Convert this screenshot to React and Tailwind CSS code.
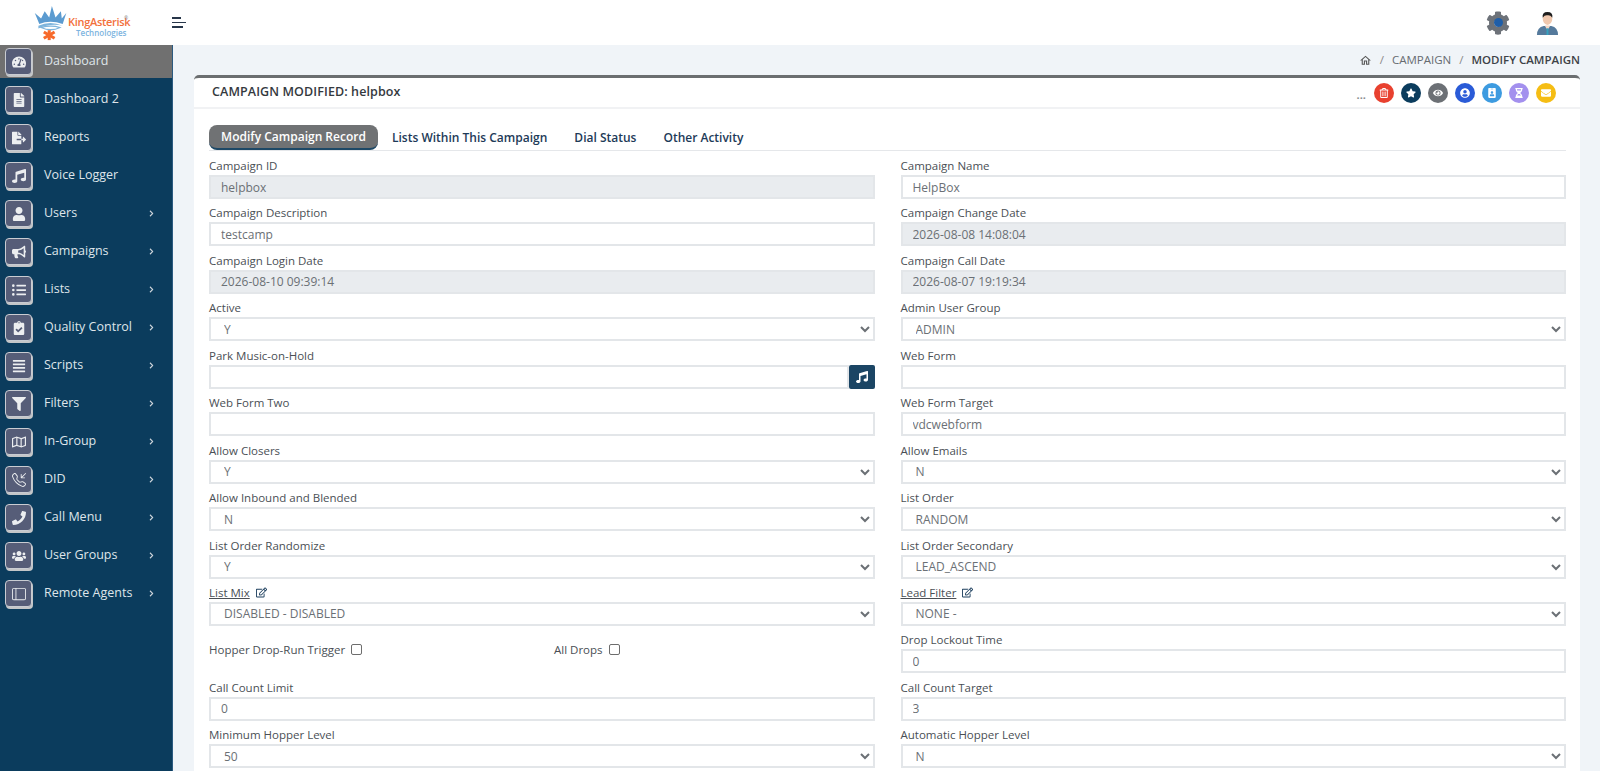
import React from "react";
import {
  FaTachometerAlt, FaFileAlt, FaFileExport, FaMusic, FaUser, FaBullhorn, FaListUl, FaClipboardCheck,
  FaAlignJustify, FaFilter, FaRegMap, FaPhone, FaUsers, FaChevronRight, FaRegEdit, FaRegTrashAlt, FaStar,
  FaEye, FaUserCircle, FaIdBadge, FaHourglassHalf, FaEnvelope, FaCog, FaHome,
} from "react-icons/fa";
import { BsTelephoneInbound, BsLayoutSidebar } from "react-icons/bs";
import { MdOutlineHome } from "react-icons/md";

const menu = [
  ["Dashboard", FaTachometerAlt, false, true],
  ["Dashboard 2", FaFileAlt, false],
  ["Reports", FaFileExport, false],
  ["Voice Logger", FaMusic, false],
  ["Users", FaUser, true],
  ["Campaigns", FaBullhorn, true],
  ["Lists", FaListUl, true],
  ["Quality Control", FaClipboardCheck, true],
  ["Scripts", FaAlignJustify, true],
  ["Filters", FaFilter, true],
  ["In-Group", FaRegMap, true],
  ["DID", BsTelephoneInbound, true],
  ["Call Menu", FaPhone, true],
  ["User Groups", FaUsers, true],
  ["Remote Agents", BsLayoutSidebar, true],
];

const actions = [
  ["bg-[#e8412f]", FaRegTrashAlt],
  ["bg-[#0b3c5d]", FaStar],
  ["bg-[#6c7075]", FaEye],
  ["bg-[#2a5bd7]", FaUserCircle],
  ["bg-[#3d9be0]", FaIdBadge],
  ["bg-[#a390ee]", FaHourglassHalf],
  ["bg-[#f5bd14]", FaEnvelope],
];

function Logo() {
  return (
    <div className="relative w-[105px] h-[42px] ml-[33px] mt-[2px]">
      <svg viewBox="0 0 40 40" className="absolute left-0 top-0 w-[36px] h-[40px]">
        <path d="M2 9 L9 15 L13 7 L18 14 L21 1 L25 14 L31 7 L32 15 L37 9 L33 21 Q19 16 7 21 Z" fill="#5b9bd0" />
        <path d="M6 23 Q19 17 33 23 Q20 20 6 26 Z" fill="#7db4dc" />
        <path d="M9 25 Q20 22 30 25 Q20 30 9 25 Z" fill="none" stroke="#7db4dc" strokeWidth="1.4" />
        <g stroke="#f7692a" strokeWidth="3.4" strokeLinecap="butt">
          <path d="M18 28 L18 39" />
          <path d="M12 30 L24 37" />
          <path d="M24 30 L12 37" />
        </g>
      </svg>
      <span className="absolute left-[35px] top-[12px] text-[11px] leading-[14px] font-semibold text-[#f2703c] whitespace-nowrap tracking-[-0.3px] [font-family:'Open_Sans',sans-serif]">KingAsterisk</span>
      <span className="absolute left-[91px] top-[12px] text-[5px] leading-[6px] text-[#888]">®</span>
      <span className="absolute left-[43px] top-[25px] text-[8px] leading-[9px] font-semibold text-[#7cb4e0] whitespace-nowrap [font-family:'Open_Sans',sans-serif]">Technologies</span>
    </div>
  );
}

function Avatar() {
  return (
    <svg viewBox="0 0 24 25" className="w-[23px] h-[24px]">
      <path d="M1 25 Q1 17 8 15.5 L16 15.5 Q23 17 23 25 Z" fill="#557a9c" />
      <path d="M9 15 L12 20 L15 15 Z" fill="#f4d6c3" />
      <path d="M11 18 L13 18 L13 25 L11 25 Z" fill="#35a3c0" />
      <ellipse cx="12" cy="8" rx="5" ry="6.5" fill="#f0c8ae" />
      <path d="M7 7 Q6 1 12 1 Q18 1 17 7 Q15 4 12 4.5 Q9 4 7 7 Z" fill="#1e1e1e" />
    </svg>
  );
}

function Gear() {
  return (
    <div className="relative w-[24px] h-[24px] flex items-center justify-center">
      <FaCog className="text-[24px] text-[#6d7279]" />
      <span className="absolute w-[9px] h-[9px] rounded-full bg-[#1f5ea8]" />
    </div>
  );
}

function Side({ label, Icon, more, active }) {
  return (
    <div className="h-[38px]">
      <div className={`h-[33px] flex items-center pl-[5px] pr-[17px] ${active ? "bg-[#707070]" : ""}`}>
        <div className="w-[27px] h-[27px] shrink-0 rounded-[4px] bg-[#565d78] border border-[#c9ccd2] shadow-[1px_2px_0_#c4c6c8] flex items-center justify-center text-[#eceef0] text-[14px]">
          <Icon />
        </div>
        <span className="ml-[12px] text-[12.5px] text-[#dfe5ea] flex-1 whitespace-nowrap">{label}</span>
        {more && <FaChevronRight className="text-[7px] text-[#cfd6dc]" />}
      </div>
    </div>
  );
}

const Lab = ({ children, edit }) => (
  <div className="h-[19px] flex items-center text-[11.5px] leading-[19px] text-[#4a4f55] font-medium">
    <span className={edit ? "underline" : ""}>{children}</span>
    {edit && <FaRegEdit className="ml-[6px] text-[11px] text-[#1d3f5e]" />}
  </div>
);

function Field({ label, value = "", disabled, select, edit, button }) {
  const base = "flex-1 w-full h-[24px] min-w-0 border-2 border-[#e3e6e9] text-[12px] text-[#6b7075] outline-none";
  return (
    <div>
      <Lab edit={edit}>{label}</Lab>
      <div className="flex">
        {select ? (
          <select defaultValue={value} className={`${base} bg-white pl-[9px] pr-0`}>
            <option>{value}</option>
          </select>
        ) : (
          <input readOnly value={value} className={`${base} px-[10px] ${disabled ? "bg-[#e9ecef]" : "bg-white"}`} />
        )}
        {button && (
          <div className="w-[26px] h-[24px] shrink-0 rounded-[2px] bg-[#1b4564] flex items-center justify-center text-white text-[12px]">
            <FaMusic />
          </div>
        )}
      </div>
    </div>
  );
}

function Check({ label, className }) {
  return (
    <div className={`flex items-center text-[11.5px] text-[#4a4f55] font-medium ${className}`}>
      <span>{label}</span>
      <span className="ml-[6px] -mt-[2px] w-[11px] h-[11px] rounded-[2px] border border-[#6d6d6d] bg-white" />
    </div>
  );
}

export default function App() {
  return (
    <div className="w-[1600px] h-[771px] overflow-hidden flex flex-col bg-white [font-family:'Open_Sans',sans-serif]">
      <header className="h-[45px] shrink-0 bg-white flex items-center">
        <div className="w-[172px] shrink-0"><Logo /></div>
        <div className="flex flex-col gap-[3px] w-[14px]">
          <span className="h-[1.5px] w-[9px] bg-[#27364a]" />
          <span className="h-[1.5px] w-[14px] bg-[#27364a]" />
          <span className="h-[1.5px] w-[11px] bg-[#27364a]" />
        </div>
        <div className="ml-auto flex items-center gap-[26px] pr-[41px]">
          <Gear />
          <Avatar />
        </div>
      </header>
      <div className="flex flex-1 min-h-0">
        <aside className="w-[173px] shrink-0 bg-[#0b3c5d] border-r border-[#2b5a80]">
          {menu.map(([l, I, m, a]) => <Side key={l} label={l} Icon={I} more={m} active={a} />)}
        </aside>
        <main className="flex-1 min-w-0 bg-[#f0f4f8] pl-[21px] pr-[20px]">
          <div className="h-[30px] flex items-center justify-end text-[11.5px] text-[#666b70]">
            <MdOutlineHome className="text-[13px] text-[#555]" />
            <span className="mx-[8px] text-[#888]">/</span>
            <span>CAMPAIGN</span>
            <span className="mx-[8px] text-[#888]">/</span>
            <span className="text-[#3d4247] font-semibold">MODIFY CAMPAIGN</span>
          </div>
          <section className="bg-white rounded-t-[5px] border-t-[3px] border-[#6b6e70] h-[800px]">
            <div className="h-[31px] border-b-2 border-[#f1f2f4] flex items-center pl-[18px] pr-[24px]">
              <h1 className="text-[12.5px] font-semibold text-[#34393e] tracking-[0.1px]">CAMPAIGN MODIFIED: helpbox</h1>
              <div className="ml-auto flex items-center gap-[7px]">
                <span className="text-[11px] leading-[11px] font-bold text-[#8a8d90] mt-[4px] mr-[1px]">...</span>
                {actions.map(([c, I], i) => (
                  <span key={i} className={`w-[20px] h-[20px] rounded-full flex items-center justify-center text-white text-[10px] ${c}`}>
                    <I />
                  </span>
                ))}
              </div>
            </div>
            <div className="pl-[15px] pr-[14px] pt-[16px]">
              <nav className="h-[26px] flex items-stretch border-b border-[#e5e7ea] text-[12px] font-semibold text-[#1d3a58]">
                <span className="w-[169px] h-[25px] rounded-[8px] bg-[#707274] border-b-2 border-[#1d4866] text-white flex items-center justify-center">Modify Campaign Record</span>
                <span className="ml-[14px] flex items-center">Lists Within This Campaign</span>
                <span className="ml-[27px] flex items-center">Dial Status</span>
                <span className="ml-[27px] flex items-center">Other Activity</span>
              </nav>
              <div className="mt-[5px] grid grid-cols-2 gap-x-[26px] auto-rows-[47.45px]">
                <Field label="Campaign ID" value="helpbox" disabled />
                <Field label="Campaign Name" value="HelpBox" />
                <Field label="Campaign Description" value="testcamp" />
                <Field label="Campaign Change Date" value="2026-08-08 14:08:04" disabled />
                <Field label="Campaign Login Date" value="2026-08-10 09:39:14" disabled />
                <Field label="Campaign Call Date" value="2026-08-07 19:19:34" disabled />
                <Field label="Active" value="Y" select />
                <Field label="Admin User Group" value="ADMIN" select />
                <Field label="Park Music-on-Hold" button />
                <Field label="Web Form" />
                <Field label="Web Form Two" />
                <Field label="Web Form Target" value="vdcwebform" />
                <Field label="Allow Closers" value="Y" select />
                <Field label="Allow Emails" value="N" select />
                <Field label="Allow Inbound and Blended" value="N" select />
                <Field label="List Order" value="RANDOM" select />
                <Field label="List Order Randomize" value="Y" select />
                <Field label="List Order Secondary" value="LEAD_ASCEND" select />
                <Field label="List Mix" value="DISABLED - DISABLED" select edit />
                <Field label="Lead Filter" value="NONE -" select edit />
                <div className="flex pt-[11px] items-start">
                  <Check label="Hopper Drop-Run Trigger" className="w-[345px]" />
                  <Check label="All Drops" />
                </div>
                <Field label="Drop Lockout Time" value="0" />
                <Field label="Call Count Limit" value="0" />
                <Field label="Call Count Target" value="3" />
                <Field label="Minimum Hopper Level" value="50" select />
                <Field label="Automatic Hopper Level" value="N" select />
              </div>
            </div>
          </section>
        </main>
      </div>
    </div>
  );
}
